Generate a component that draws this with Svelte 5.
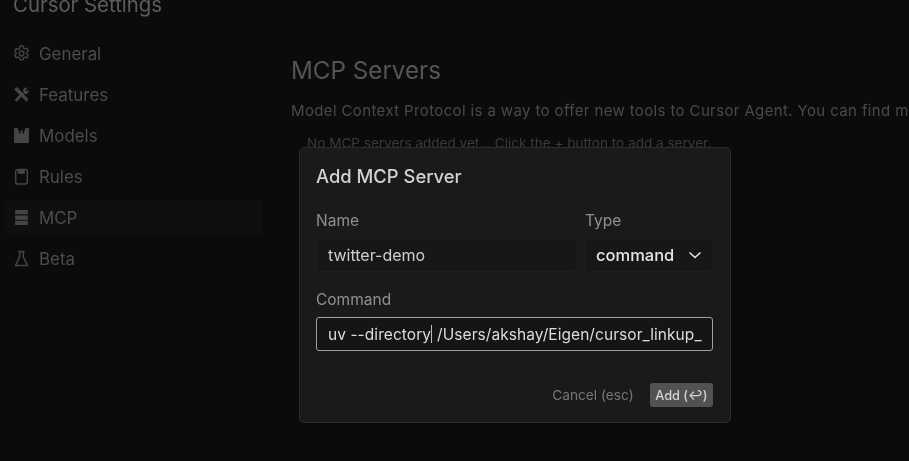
<script lang="ts">
  const NAV = [
    { id: "general", label: "General" },
    { id: "features", label: "Features" },
    { id: "models", label: "Models" },
    { id: "rules", label: "Rules" },
    { id: "mcp", label: "MCP" },
    { id: "beta", label: "Beta" },
  ];
</script>

<div class="page">
  <aside class="side">
    <div class="title">Cursor Settings</div>
    <nav>
      {#each NAV as item}
        <div class="item" class:active={item.id === "mcp"}>
          <svg class="ico" viewBox="0 0 16 16" width="17" height="17" aria-hidden="true">
            {#if item.id === "general"}
              <path d="M6.6 1h2.8l.4 1.9 1.3.7 1.9-.6 1.4 2.4-1.4 1.3v1.6l1.4 1.3-1.4 2.4-1.9-.6-1.3.7-.4 1.9H6.6l-.4-1.9-1.3-.7-1.9.6-1.4-2.4 1.4-1.3V7.2L1.6 5.9 3 3.5l1.9.6 1.3-.7z" fill="none" stroke="currentColor" stroke-width="1.3" stroke-linejoin="round" />
              <circle cx="8" cy="8" r="2.3" fill="none" stroke="currentColor" stroke-width="1.3" />
            {:else if item.id === "features"}
              <path d="M2.5 14L9.6 6.6" fill="none" stroke="currentColor" stroke-width="2.6" />
              <path d="M9.4 4.2A3.4 3.4 0 0 1 14 1.6l-2.2 2.2 1 1.4 2.2-1.6a3.4 3.4 0 0 1-4.4 3.8z" fill="currentColor" />
              <path d="M1 3.2L3 1l2.4 1.6L14.6 12.4l-2 2.4L3.4 5.4z" fill="currentColor" />
            {:else if item.id === "models"}
              <path d="M1 1h3.4L6 6h1V3h2v3h1l1.6-5H15v14H1z" fill="currentColor" />
            {:else if item.id === "rules"}
              <path d="M4.5 1.5h7a2 2 0 0 1 2 2v9.5a2 2 0 0 1-2 2h-7a2 2 0 0 1-2-2V3.5a2 2 0 0 1 2-2z" fill="none" stroke="currentColor" stroke-width="1.4" />
              <path d="M4.5 1.5h6.5v4H4.5z" fill="currentColor" />
            {:else if item.id === "mcp"}
              <path d="M2 1h12v4H2zM2 6h12v4H2zM2 11h12v4H2z" fill="currentColor" />
            {:else}
              <path d="M5 1.5h6M6.3 1.5v5L2.3 14.5h11.4L9.7 6.5v-5" fill="none" stroke="currentColor" stroke-width="1.4" stroke-linejoin="round" />
            {/if}
          </svg>
          <span>{item.label}</span>
        </div>
      {/each}
    </nav>
  </aside>

  <main class="main">
    <h1>MCP Servers</h1>
    <p class="desc">Model Context Protocol is a way to offer new tools to Cursor Agent. You can find more</p>
    <p class="empty">No MCP servers added yet... Click the + button to add a server.</p>
  </main>

  <div class="dialog">
    <h2>Add MCP Server</h2>
    <div class="row">
      <div class="field grow">
        <span class="lbl">Name</span>
        <div class="input">twitter-demo</div>
      </div>
      <div class="field type">
        <span class="lbl">Type</span>
        <div class="input select">
          command
          <svg viewBox="0 0 14 8" width="14" height="8" aria-hidden="true">
            <path d="M1.5 1.5L7 6.5l5.5-5" fill="none" stroke="currentColor" stroke-width="1.5" />
          </svg>
        </div>
      </div>
    </div>
    <div class="field cmd">
      <span class="lbl">Command</span>
      <div class="input focus">
        <span>uv --directory</span><i class="caret"></i><span>/Users/akshay/Eigen/cursor_linkup_</span>
      </div>
    </div>
    <div class="actions">
      <span class="cancel">Cancel (esc)</span>
      <span class="add">Add (↩)</span>
    </div>
  </div>
</div>

<style>
  :global(body) {
    background: #0b0b0c;
  }
  .page {
    position: relative;
    width: 909px;
    height: 461px;
    overflow: hidden;
    display: flex;
    background: #0b0b0c;
    font-family: Inter, "Liberation Sans", sans-serif;
    filter: blur(0.5px);
  }
  .side {
    width: 262px;
    flex: none;
    padding-left: 4px;
    box-sizing: border-box;
  }
  .title {
    margin: -7px 0 0 9px;
    height: 43px;
    font-size: 20.4px;
    line-height: 24px;
    color: #5c5c5c;
  }
  nav {
    display: flex;
    flex-direction: column;
    gap: 6px;
  }
  .item {
    height: 35px;
    display: flex;
    align-items: center;
    gap: 9px;
    padding-left: 9px;
    font-size: 16.9px;
    color: #4c4c4c;
    border-radius: 4px;
  }
  .item .ico {
    flex: none;
    color: #454545;
  }
  .item.active {
    background: #0f0f10;
  }
  .main {
    padding: 56px 0 0 29px;
    min-width: 0;
    flex: 1;
    overflow: hidden;
  }
  h1 {
    margin: 0;
    font-size: 24.2px;
    line-height: 30px;
    font-weight: 400;
    color: #555;
  }
  .desc {
    margin: 15px 0 0;
    font-size: 15px;
    line-height: 20px;
    color: #4a4a4a;
    white-space: nowrap;
    letter-spacing: 0.37px;
  }
  .empty {
    margin: 13px 0 0 16px;
    font-size: 13.55px;
    line-height: 18px;
    color: #3a3a3a;
    white-space: nowrap;
  }
  .dialog {
    position: absolute;
    left: 299px;
    top: 147px;
    width: 432px;
    height: 276px;
    box-sizing: border-box;
    padding: 17px 17px 0 16px;
    background: #1a1a1b;
    border: 1px solid #2c2c2d;
    border-radius: 5px;
  }
  h2 {
    margin: 0;
    font-size: 18.4px;
    line-height: 22px;
    font-weight: 500;
    color: #d2d2d2;
  }
  .row {
    display: flex;
    gap: 8px;
    margin-top: 25px;
  }
  .field {
    display: flex;
    flex-direction: column;
    gap: 8px;
  }
  .grow {
    flex: 1;
  }
  .type {
    width: 128px;
  }
  .lbl {
    font-size: 15.5px;
    line-height: 18px;
    color: #8f8f8f;
  }
  .input {
    height: 34px;
    box-sizing: border-box;
    display: flex;
    align-items: center;
    padding: 0 11px;
    font-size: 16px;
    color: #cfcfcf;
    background: #171718;
    border: 1px solid #1d1d1e;
    border-radius: 3px;
    white-space: nowrap;
  }
  .select {
    justify-content: space-between;
    padding: 0 10px;
    color: #e6e6e6;
    font-weight: 500;
    font-size: 16.5px;
  }
  .cmd {
    margin-top: 19px;
  }
  .focus {
    border-color: #a0a0a0;
    background: #151516;
    color: #dcdcdc;
    font-size: 15.5px;
    letter-spacing: 0.06px;
  }
  .caret {
    flex: none;
    width: 1px;
    height: 18px;
    margin: 0 5px 0 0;
    background: #bbb;
  }
  .actions {
    display: flex;
    justify-content: flex-end;
    align-items: center;
    gap: 16px;
    margin-top: 32px;
    font-size: 13.7px;
  }
  .cancel {
    color: #777;
  }
  .add {
    height: 24px;
    padding: 0 5.5px;
    display: flex;
    align-items: center;
    color: #d4d4d4;
    background: #525252;
    border-radius: 3px;
    font-size: 12.8px;
    font-weight: 500;
  }
</style>
